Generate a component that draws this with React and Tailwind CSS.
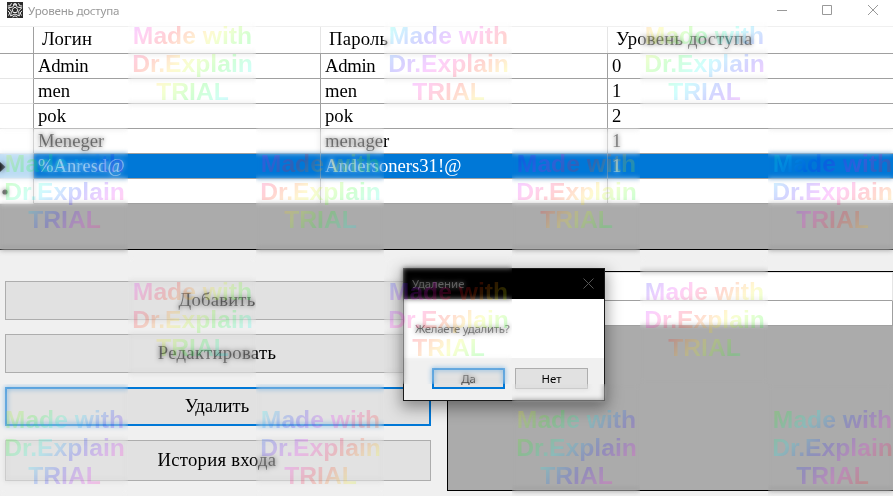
import React from "react";

const users = [
  { login: "Admin", password: "Admin", level: "0" },
  { login: "men", password: "men", level: "1" },
  { login: "pok", password: "pok", level: "2" },
  { login: "Meneger", password: "menager", level: "1" },
  { login: "%Anresd@", password: "Andersoners31!@", level: "1", selected: true },
  { login: "", password: "", level: "" },
];

// Starting hue of each watermark tile; null leaves the cell clear.
const tiles = [
  null, 242, null, 125, null, 345, null,
  25, null, 242, null, 195, null, 110,
  null, 245, null, 185, null, 195, null,
  20, null, 130, null, 10, null, 62,
];

function rainbow(start) {
  const stops = [];
  for (let i = 0; i <= 16; i++) {
    stops.push(`hsl(${(start + i * 24) % 360} 100% 50%)`);
  }
  return `linear-gradient(135deg, ${stops.join(", ")})`;
}

function AppIcon() {
  return (
    <svg width="16" height="16" viewBox="0 0 16 16" className="shrink-0">
      <rect width="16" height="16" fill="#2b2b2b" />
      <g fill="none" stroke="#f0f0f0" strokeWidth="1">
        <path d="M8 5.2 10.8 7.2 9.8 10.5H6.2L5.2 7.2Z" />
        <path d="M8 1 10.2 5 14.8 5.8 11.6 9.2 12.4 14 8 12 3.6 14 4.4 9.2 1.2 5.8 5.8 5Z" />
        <path d="M4.5 1.2 3.2 3.8 0.8 4M11.5 1.2 12.8 3.8 15.2 4M1 8.8 2.8 11 1.5 13.5M15 8.8 13.2 11 14.5 13.5M5.6 15.2 8 13.8 10.4 15.2M6 2 8 3.2 10 2" />
      </g>
    </svg>
  );
}

function TitleBar() {
  return (
    <header className="flex h-[26px] shrink-0 bg-white pl-[7px] font-['Noto_Sans',sans-serif] text-[#999]">
      <div className="pt-[2px]"><AppIcon /></div>
      <span className="ml-[5px] h-[22px] whitespace-nowrap text-[11.6px] leading-[22px] tracking-[-0.24px]">Уровень доступа</span>
      <svg width="101" height="20" viewBox="0 0 101 20" className="mr-[15px] ml-auto" fill="none" stroke="#999">
        <path d="M0 10.5H10" />
        <path d="M45.5 5.5H54.5V14.5H45.5Z" />
        <path d="M91 5 101 15M101 5 91 15" />
      </svg>
    </header>
  );
}

function UsersGrid() {
  return (
    <section className="flex h-[224px] shrink-0 flex-col border-t border-b border-t-[#f0f0f0] border-b-black bg-[#ababab] text-[18.67px]">
      <div className="flex h-[27px] shrink-0 border-b border-[#a0a0a0] bg-white leading-[24px] tracking-[0.2px]">
        <div className="w-[34px] border-r border-[#a0a0a0]" />
        <div className="w-[287px] border-r border-[#e5e5e5] pl-[8px]">Логин</div>
        <div className="w-[287px] border-r border-[#e5e5e5] pl-[8px]">Пароль</div>
        <div className="flex-1 pl-[8px]">Уровень доступа</div>
      </div>
      {users.map((u, i) => (
        <div key={i} className="flex h-[25px] shrink-0 bg-white leading-[23px]">
          <div className={`flex w-[34px] items-center border-r border-b border-r-[#a0a0a0] border-b-[#e5e5e5] ${u.selected ? "bg-[#bcdcf4]" : ""}`}>
            {u.selected && (
              <svg width="6" height="10" viewBox="0 0 6 10" className="mt-[2px]"><path d="M0 0 5.5 5 0 10Z" fill="#111" /></svg>
            )}
            {i === 5 && (
              <svg width="8" height="8" viewBox="0 0 8 8" className="ml-[1px] mt-[2px]"><circle cx="4" cy="4" r="2.6" fill="#222" /></svg>
            )}
          </div>
          <div className={`flex flex-1 border-b border-[#a0a0a0] ${u.selected ? "bg-[#0078d7] text-white" : ""}`}>
            <div className={`w-[287px] border-r border-[#a0a0a0] pl-[4px] ${i === 0 ? "tracking-[-0.3px]" : ""}`}>{u.login}</div>
            <div className={`w-[287px] border-r border-[#a0a0a0] pl-[4px] ${i === 0 ? "tracking-[-0.3px]" : ""}`}>{u.password}</div>
            <div className="flex-1 pl-[4px]">{u.level}</div>
          </div>
        </div>
      ))}
    </section>
  );
}

function Actions() {
  const base = "flex w-[426px] items-center justify-center bg-[#e1e1e1] pr-[2px] text-[18.67px] leading-none";
  return (
    <div className="flex w-[447px] shrink-0 flex-col pt-[31px] pl-[5px]">
      <button className={`${base} h-[39px] border border-[#adadad] tracking-[0.2px]`}>Добавить</button>
      <button className={`${base} mt-[14px] h-[39px] border border-[#adadad] tracking-[0.3px]`}>Редактировать</button>
      <button className={`${base} mt-[14px] h-[39px] border-2 border-[#0078d7]`}>Удалить</button>
      <button className={`${base} mt-[14px] h-[41px] border border-[#adadad] tracking-[0.25px]`}>История входа</button>
    </div>
  );
}

function HistoryGrid() {
  return (
    <div className="mt-[21px] h-[220px] flex-1 border-t border-b border-l border-black bg-[#ababab]">
      <div className="h-[29px] border-t border-r border-b border-t-[#e5e5e5] border-r-[#e5e5e5] border-b-[#a0a0a0] bg-white" />
      <div className="h-[25px] border-r border-b border-[#a0a0a0] bg-white" />
    </div>
  );
}

function ConfirmDialog() {
  return (
    <div className="absolute top-[268px] left-[403px] flex h-[133px] w-[202px] flex-col border border-[#1a1a1a] bg-white font-['Noto_Sans',sans-serif] text-[11.4px] shadow-[0_5px_14px_2px_rgba(0,0,0,0.38)]">
      <div className="flex h-[30px] shrink-0 items-center justify-between bg-black pr-[10px] pl-[8px] text-[#aaa]">
        <span>Удаление</span>
        <svg width="11" height="11" viewBox="0 0 11 11" className="-mt-[2px]" stroke="#555">
          <path d="M0.5 0.5 10.5 10.5M10.5 0.5 0.5 10.5" />
        </svg>
      </div>
      <div className="flex flex-1 items-center pl-[11px] tracking-[-0.27px]">Желаете удалить?</div>
      <div className="flex h-[42px] shrink-0 gap-[10px] bg-[#f0f0f0] pt-[10px] pl-[28px]">
        <button className="flex h-[21px] w-[73px] items-center justify-center border-2 border-[#0078d7] bg-[#e1e1e1]">Да</button>
        <button className="flex h-[21px] w-[73px] items-center justify-center border border-[#adadad] bg-[#e1e1e1]">Нет</button>
      </div>
    </div>
  );
}

function Watermarks() {
  return (
    <div className="pointer-events-none absolute inset-0 grid auto-rows-[128px] grid-cols-[repeat(7,128px)] overflow-hidden">
      {tiles.map((hue, i) =>
        hue === null ? (
          <div key={i} />
        ) : (
          <div key={i} className="backdrop-blur-[2.8px] backdrop-opacity-[0.62]">
            <div
              className="h-[128px] w-[128px] bg-clip-text pt-[22px] pl-px text-center font-['Liberation_Sans',sans-serif] text-[24.7px] leading-[28px] font-bold whitespace-nowrap text-transparent opacity-[0.18]"
              style={{ backgroundImage: rainbow(hue) }}
            >
              Made with
              <br />
              Dr.Explain
              <br />
              TRIAL
            </div>
          </div>
        )
      )}
    </div>
  );
}

export default function App() {
  return (
    <div className="relative flex h-[496px] w-[893px] flex-col overflow-hidden bg-[#f0f0f0] font-['Liberation_Serif',serif] text-black">
      <TitleBar />
      <UsersGrid />
      <main className="flex flex-1">
        <Actions />
        <HistoryGrid />
      </main>
      <ConfirmDialog />
      <Watermarks />
    </div>
  );
}
